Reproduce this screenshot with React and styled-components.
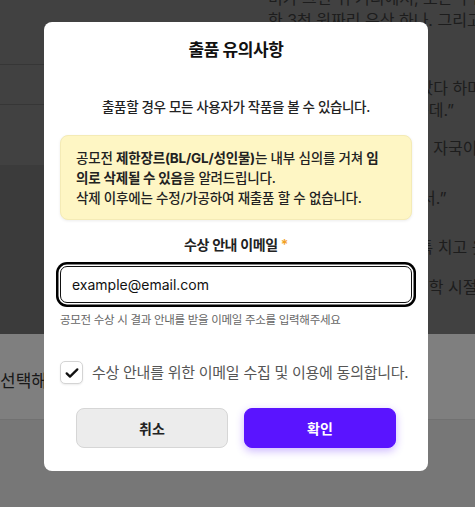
import React, { useState } from 'react';
import { styled, createGlobalStyle } from 'styled-components';

const GlobalStyle = createGlobalStyle`
  * { box-sizing: border-box; }
  body {
    margin: 0;
    font-family: Inter, "Noto Sans CJK KR", sans-serif;
    background: #eeeeee;
  }
`;

const Page = styled.div`
  height: 100vh;
  overflow: hidden;
  background: #eeeeee;
`;

const Main = styled.div`
  display: grid;
  grid-template-columns: 262px 1fr;
  height: 334px;
  background: #828282;
`;

const Sidebar = styled.div`
  display: flex;
  flex-direction: column;
`;

const SideRow = styled.div`
  height: ${(p) => p.$h}px;
  border-bottom: ${(p) => (p.$line ? '1px solid #6c6c6c' : 'none')};
`;

const SideFill = styled.div`
  flex: 1;
  background: #777777;
`;

const Article = styled.div`
  overflow: hidden;
  padding-left: 6px;
  color: #3a3a3a;
  font-size: 16px;
  line-height: 22px;
  margin-top: -13px;
`;

const Line = styled.div`
  white-space: nowrap;
  margin-top: ${(p) => p.$gap || 0}px;
`;

const BottomBar = styled.div`
  height: 86px;
  background: #ffffff;
  border-bottom: 1px solid #e2e2e2;
  display: flex;
  align-items: center;
  padding-top: 6px;
  font-size: 17px;
  color: #333;
  white-space: nowrap;
`;

const Overlay = styled.div`
  position: fixed;
  inset: 0;
  background: rgba(0, 0, 0, 0.5);
  display: flex;
  justify-content: center;
  align-items: flex-start;
  padding: 22px 3px 0 0;
`;

const Modal = styled.div`
  width: 384px;
  background: #fff;
  border-radius: 8px;
  padding: 15px 16px 23px;
  display: flex;
  flex-direction: column;
  color: #1a1a1a;
`;

const Title = styled.h2`
  margin: 0;
  text-align: center;
  font-size: 17px;
  line-height: 26px;
  font-weight: 700;
  letter-spacing: -0.4px;
  color: #111;
`;

const Subtitle = styled.p`
  margin: 34px 0 0;
  text-align: center;
  font-size: 13.5px;
  line-height: 20px;
  font-weight: 500;
  letter-spacing: -0.35px;
  color: #222;
`;

const Notice = styled.div`
  margin-top: 18px;
  background: #fef6c4;
  border: 1px solid #f4ebb6;
  border-radius: 8px;
  box-shadow: 0 1px 3px rgba(0, 0, 0, 0.08);
  padding: 12px 15px 11px;
  font-size: 13.5px;
  line-height: 20px;
  letter-spacing: -0.2px;
  font-weight: 500;
  color: #222;
  white-space: nowrap;

  b { font-weight: 700; }
`;

const Label = styled.div`
  margin-top: 15px;
  text-align: center;
  font-size: 14px;
  line-height: 20px;
  font-weight: 600;
  letter-spacing: -0.4px;
  color: #222;

  span { color: #f2a11f; }
`;

const EmailInput = styled.input`
  margin-top: 11px;
  height: 37px;
  width: 100%;
  border: 1.5px solid #111;
  border-radius: 7px;
  box-shadow: 0 0 0 1.5px #fff, 0 0 0 4px #000;
  padding: 0 11px;
  font-family: Inter, "Noto Sans CJK KR", sans-serif;
  font-size: 14px;
  color: #111;
  outline: none;
  background: #fff;
`;

const Helper = styled.div`
  margin-top: 9px;
  font-size: 11.5px;
  line-height: 16px;
  letter-spacing: -0.3px;
  color: #666;
`;

const AgreeRow = styled.label`
  margin-top: 33px;
  display: flex;
  align-items: center;
  gap: 9px;
  cursor: pointer;
`;

const CheckBox = styled.span`
  width: 23px;
  height: 23px;
  flex: none;
  border: 1px solid #d4d4d4;
  border-radius: 5px;
  background: #fff;
  box-shadow: 0 1px 2px rgba(0, 0, 0, 0.08);
  display: flex;
  align-items: center;
  justify-content: center;
`;

const AgreeText = styled.span`
  font-size: 15px;
  line-height: 22px;
  color: #555;
  letter-spacing: -0.25px;
  white-space: nowrap;
`;

const Buttons = styled.div`
  margin-top: 24px;
  padding: 0 16px;
  display: grid;
  grid-template-columns: 1fr 1fr;
  gap: 16px;
`;

const Button = styled.button`
  height: 40px;
  border-radius: 8px;
  font-family: Inter, "Noto Sans CJK KR", sans-serif;
  font-size: 14px;
  font-weight: 700;
  cursor: pointer;
  border: 1px solid ${(p) => (p.$primary ? '#5a14ff' : '#d6d6d6')};
  background: ${(p) => (p.$primary ? '#5a14ff' : '#ececec')};
  color: ${(p) => (p.$primary ? '#fff' : '#222')};
  box-shadow: ${(p) => (p.$primary ? '0 3px 8px rgba(90, 20, 255, 0.3)' : 'none')};
`;

export default function App() {
  const [email, setEmail] = useState('example@email.com');
  const [agree, setAgree] = useState(true);

  return (
    <>
      <GlobalStyle />
      <Page>
        <Main>
          <Sidebar>
            <SideRow $h={65} $line />
            <SideRow $h={40} $line />
            <SideRow $h={60} />
            <SideFill />
          </Sidebar>
          <Article>
            <Line>비가 그친 뒤 거리에서, 모든 우산이 사라졌다</Line>
            <Line>한 3천 원짜리 우산 하나. 그리고 예전</Line>
            <Line $gap={46}>그는 아무 말도 하지 않았다 하며 흠</Line>
            <Line>그때는 누구도 잘 몰랐는데.”</Line>
            <Line $gap={16}>손등에는 아직도 그 긁힌 자국이 있</Line>
            <Line $gap={28}>“그냥 지나가는 길에 봐서.”</Line>
            <Line $gap={27}>그는 내 어깨를 가볍게 툭 치고 웃</Line>
            <Line $gap={18}>우리는 그렇게 지나간 대학 시절</Line>
          </Article>
        </Main>
        <BottomBar>선택해주세요</BottomBar>
      </Page>

      <Overlay>
        <Modal>
          <Title>출품 유의사항</Title>
          <Subtitle>출품할 경우 모든 사용자가 작품을 볼 수 있습니다.</Subtitle>
          <Notice>
            공모전 <b>제한장르(BL/GL/성인물)</b>는 내부 심의를 거쳐 <b>임</b>
            <br />
            <b>의로 삭제될 수 있음</b>을 알려드립니다.
            <br />
            삭제 이후에는 수정/가공하여 재출품 할 수 없습니다.
          </Notice>
          <Label>
            수상 안내 이메일 <span>*</span>
          </Label>
          <EmailInput value={email} onChange={(e) => setEmail(e.target.value)} />
          <Helper>공모전 수상 시 결과 안내를 받을 이메일 주소를 입력해주세요</Helper>
          <AgreeRow onClick={() => setAgree(!agree)}>
            <CheckBox>
              {agree && (
                <svg width="16" height="16" viewBox="0 0 24 24" fill="none">
                  <path d="M4 12.5l5 5L20 6.5" stroke="#111" strokeWidth="3.4" strokeLinecap="round" strokeLinejoin="round" />
                </svg>
              )}
            </CheckBox>
            <AgreeText>수상 안내를 위한 이메일 수집 및 이용에 동의합니다.</AgreeText>
          </AgreeRow>
          <Buttons>
            <Button>취소</Button>
            <Button $primary>확인</Button>
          </Buttons>
        </Modal>
      </Overlay>
    </>
  );
}
